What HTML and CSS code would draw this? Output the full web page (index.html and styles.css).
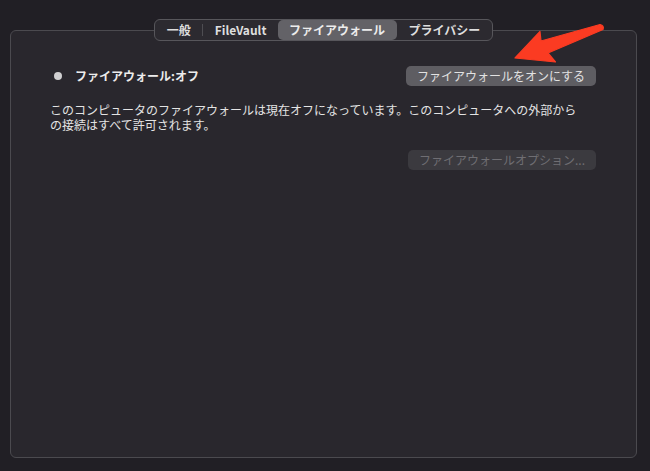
FILE: index.html
```html
<!DOCTYPE html>
<html lang="ja">
<head>
<meta charset="utf-8">
<link rel="stylesheet" href="styles.css">
</head>
<body>
<div class="window">
  <div class="tabs-row">
    <div class="tabs">
      <div class="tab">一般</div>
      <div class="sep"></div>
      <div class="tab">FileVault</div>
      <div class="tab selected">ファイアウォール</div>
      <div class="tab">プライバシー</div>
    </div>
  </div>
  <div class="panel">
    <div class="status-row">
      <div class="status">
        <span class="dot"></span>
        <span class="status-label">ファイアウォール:オフ</span>
      </div>
      <button class="btn primary">ファイアウォールをオンにする</button>
    </div>
    <p class="desc">このコンピュータのファイアウォールは現在オフになっています。このコンピュータへの外部からの接続はすべて許可されます。</p>
    <div class="options-row">
      <button class="btn disabled">ファイアウォールオプション...</button>
    </div>
  </div>
</div>
<svg class="arrow" width="650" height="471" viewBox="0 0 650 471">
  <path d="M515 58 L540 31.5 L541 41 L600 24.5 Q604.5 25.5 603 29.5 L548 53 L555.5 62 Z" fill="#fb3b22" stroke="#fb3b22" stroke-width="1.2" stroke-linejoin="round"/>
</svg>
</body>
</html>
```

FILE: styles.css
```css
html, body {
  margin: 0;
  padding: 0;
}
body {
  width: 650px;
  height: 471px;
  background: #211f25;
  font-family: "Noto Sans CJK JP", "Noto Sans", sans-serif;
  color: #e6e6e6;
  overflow: hidden;
  position: relative;
}
.window {
  padding-top: 19px;
  padding-left: 10px;
}
.tabs-row {
  width: 627px;
  display: flex;
  justify-content: center;
  margin-bottom: -11px;
  position: relative;
  z-index: 1;
}
.tabs {
  display: flex;
  align-items: center;
  height: 22px;
  box-sizing: border-box;
  border: 1px solid #57565b;
  border-radius: 6px;
  background: #2c2a30;
  padding: 0;
}
.tab {
  height: 20px;
  line-height: 20px;
  padding: 0 11.5px;
  font-size: 12px;
  font-weight: 700;
  color: #dedede;
  border-radius: 5px;
  white-space: nowrap;
}
.tab.selected {
  background: #636267;
  color: #ececec;
  padding: 0 12px 0 11px;
}
.sep {
  width: 1px;
  height: 12px;
  background: #4e4d52;
}
.panel {
  width: 627px;
  height: 428px;
  box-sizing: border-box;
  border: 1px solid #4b4a4f;
  border-radius: 6px;
  background: #29272d;
  padding: 35px 40px 0 39px;
}
.status-row {
  display: flex;
  align-items: center;
  justify-content: space-between;
  height: 20px;
  padding-left: 4px;
}
.status {
  display: flex;
  align-items: center;
  gap: 13px;
}
.dot {
  width: 8px;
  height: 8px;
  border-radius: 50%;
  background: #cfcfd1;
  display: block;
}
.status-label {
  font-size: 12px;
  font-weight: 700;
  color: #ececec;
  line-height: 20px;
}
.btn {
  font-family: "Noto Sans CJK JP", "Noto Sans", sans-serif;
  font-size: 12px;
  height: 20px;
  line-height: 20px;
  border: none;
  border-radius: 5px;
  padding: 0;
  text-align: center;
  white-space: nowrap;
}
.btn.primary {
  width: 190px;
  background: #5e5d62;
  color: #e2e2e2;
}
.btn.disabled {
  width: 188px;
  background: #3b3a3f;
  color: #6f6e73;
}
.desc {
  margin: 17px 0 0 0;
  width: 535px;
  font-size: 12px;
  line-height: 14.5px;
  color: #e4e4e4;
}
.options-row {
  display: flex;
  justify-content: flex-end;
  margin-top: 18px;
}
.arrow {
  position: absolute;
  left: 0;
  top: 0;
  pointer-events: none;
}
```
